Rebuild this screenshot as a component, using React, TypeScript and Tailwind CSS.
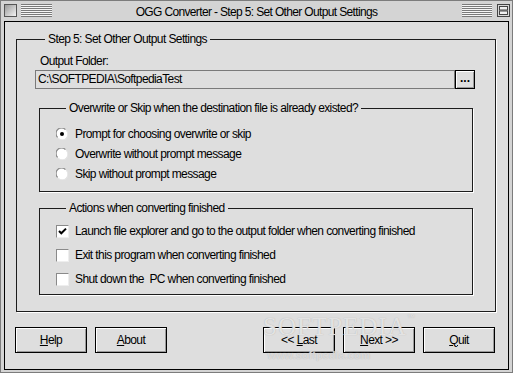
import React from "react";

function Radio({ checked }: { checked?: boolean }) {
  return (
    <svg width="12" height="12" viewBox="0 0 12 12" className="shrink-0">
      <circle cx="6" cy="6" r="5.5" fill="#ffffff" />
      <path d="M1.6 9.4 A5.2 5.2 0 0 1 9.4 1.6" stroke="#8a8a8a" strokeWidth="1.2" fill="none" />
      <path d="M2.6 10.4 A5.2 5.2 0 0 0 10.4 2.6" stroke="#e6e6e6" strokeWidth="1" fill="none" />
      {checked && <circle cx="6" cy="6" r="2" fill="#000" />}
    </svg>
  );
}

function Check({ checked }: { checked?: boolean }) {
  return (
    <div className="w-[13px] h-[13px] shrink-0 bg-white border-t border-l border-[#8a8a8a] border-b border-r border-b-[#eeeeee] border-r-[#eeeeee] flex items-center justify-center">
      {checked && (
        <svg width="9" height="9" viewBox="0 0 9 9">
          <path d="M1 4 L3.3 6.3 L8 1.6" stroke="#000" strokeWidth="2" fill="none" />
        </svg>
      )}
    </div>
  );
}

function Btn({ children, className = "" }: { children: React.ReactNode; className?: string }) {
  return (
    <div
      className={
        "w-[72px] h-[26px] border border-black bg-[#dedede] shadow-[inset_1px_1px_0_#ffffff,inset_-1px_-1px_0_#9a9a9a] flex items-center justify-center " +
        className
      }
    >
      <span className="whitespace-pre">{children}</span>
    </div>
  );
}

const grip =
  "h-[13px] bg-[repeating-linear-gradient(to_bottom,#7a7a7a_0px,#7a7a7a_1px,#f6f6f6_1px,#f6f6f6_2px)]";

export default function App() {
  return (
    <div className="w-[513px] h-[373px] bg-[#d4d4d4] border border-[#7c7c7c] flex flex-col pb-[2px] font-['Liberation_Sans',Arial,sans-serif] text-[12px] tracking-[-0.6px] leading-[15px] text-black">
      {/* Title bar */}
      <div className="h-[20px] grid grid-cols-[1fr_auto_1fr] items-start pt-[3px]">
        <div className="flex items-start pl-[3px]">
          <div className="w-[13px] h-[13px] border border-[#555555] bg-gradient-to-br from-[#9a9a9a] to-[#f4f4f4]" />
          <div className={"ml-[4px] w-[31px] " + grip} />
        </div>
        <div className="text-[12px] tracking-[-0.65px] leading-[15px] pt-[1px] text-black">
          OGG Converter - Step 5: Set Other Output Settings
        </div>
        <div className="flex items-start justify-end pr-[2px]">
          <div className={"w-[30px] mr-[5px] " + grip} />
          <svg width="13" height="13" viewBox="0 0 13 13">
            <rect x="0.5" y="0.5" width="12" height="12" fill="#d8d8d8" stroke="#444" />
            <rect x="2.5" y="2.5" width="8" height="3.5" fill="#f0f0f0" stroke="#444" />
            <rect x="2.5" y="7" width="8" height="3.5" fill="#f0f0f0" stroke="#444" />
          </svg>
        </div>
      </div>

      {/* Client area */}
      <div className="relative flex-1 mx-[3px] border border-black bg-[#dedede] flex flex-col">
        <fieldset className="mt-[10px] ml-[11px] mr-[12px] border border-[#1c1c1c] shadow-[1px_1px_0_#ffffff] pl-[18px] pr-[20px] pb-[16px]">
          <legend className="ml-[10px] px-[3px] leading-[15px]">Step 5: Set Other Output Settings</legend>
          <div className="mt-[7px] ml-[5px] h-[15px]">Output Folder:</div>
          <div className="mt-[1px] flex h-[19px]">
            <div className="flex-1 border border-[#7a7a7a] pl-[2px] flex items-center">C:\SOFTPEDIA\SoftpediaTest</div>
            <div className="w-[20px] border border-black bg-[#dedede] shadow-[inset_1px_1px_0_#ffffff,inset_-1px_-1px_0_#9a9a9a] flex items-center justify-center font-bold leading-[8px] pb-[3px] tracking-[0px]">
              ...
            </div>
          </div>

          <fieldset className="mt-[12px] ml-[4px] mr-[2px] border border-[#1c1c1c] shadow-[1px_1px_0_#ffffff] pt-[8px] pb-[7px] pl-[16px]">
            <legend className="ml-[10px] px-[3px] leading-[15px]">
              Overwrite or Skip when the destination file is already existed?
            </legend>
            <div className="h-[20px] flex items-center gap-[7px]">
              <Radio checked />
              <span>Prompt for choosing overwrite or skip</span>
            </div>
            <div className="h-[20px] flex items-center gap-[7px]">
              <Radio />
              <span>Overwrite without prompt message</span>
            </div>
            <div className="h-[20px] flex items-center gap-[7px]">
              <Radio />
              <span>Skip without prompt message</span>
            </div>
          </fieldset>

          <fieldset className="mt-[9px] ml-[4px] mr-[2px] border border-[#1c1c1c] shadow-[1px_1px_0_#ffffff] pt-[3px] pb-[3px] pl-[16px]">
            <legend className="ml-[10px] px-[3px] leading-[15px]">Actions when converting finished</legend>
            <div className="h-[24px] flex items-center gap-[6px]">
              <Check checked />
              <span className="whitespace-nowrap">Launch file explorer and go to the output folder when converting finished</span>
            </div>
            <div className="h-[24px] flex items-center gap-[6px]">
              <Check />
              <span>Exit this program when converting finished</span>
            </div>
            <div className="h-[24px] flex items-center gap-[6px]">
              <Check />
              <span className="whitespace-pre">Shut down the  PC when converting finished</span>
            </div>
          </fieldset>
        </fieldset>

        <div className="mt-[15px] flex pl-[10px] pr-[13px]">
          <Btn>
            <span className="underline">H</span>elp
          </Btn>
          <Btn className="ml-[8px]">
            <span className="underline">A</span>bout
          </Btn>
          <div className="flex-1" />
          <Btn>
            {"<< "}
            <span className="underline">L</span>ast
          </Btn>
          <Btn className="ml-[8px]">
            <span className="underline">N</span>ext {">>"}
          </Btn>
          <Btn className="ml-[8px]">
            <span className="underline">Q</span>uit
          </Btn>
        </div>

        {/* Watermark overlay */}
        <div className="pointer-events-none absolute left-[258px] top-[292px] flex flex-col items-center tracking-[0px]">
          <div className="flex items-start">
            <span className="font-['Liberation_Serif',serif] text-[25px] leading-[26px] tracking-[1px] text-[#f2f2f2]/80 [text-shadow:0_0_1px_#a8a8a8]">
              SOFTPEDIA
            </span>
            <span className="text-[8px] leading-[8px] text-[#f2f2f2]/80 [text-shadow:0_0_1px_#a8a8a8]">™</span>
          </div>
          <span className="mt-[10px] -ml-[40px] text-[11px] leading-[11px] font-bold text-[#f2f2f2]/60 [text-shadow:0_0_1px_#b0b0b0]">
            www.softpedia.com
          </span>
        </div>
      </div>
    </div>
  );
}
